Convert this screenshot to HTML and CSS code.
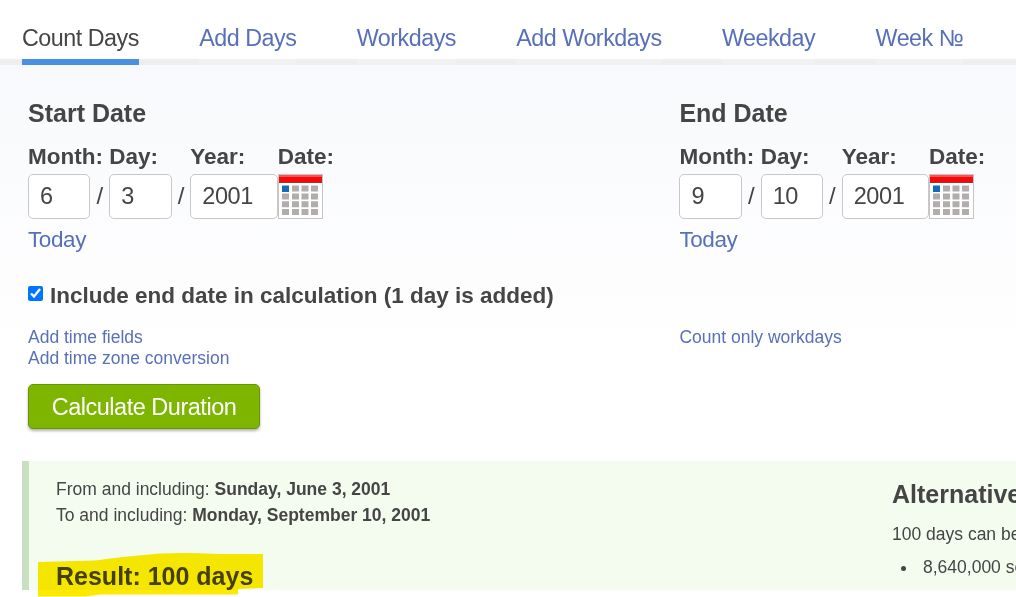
FILE: index.html
```html
<!DOCTYPE html>
<html lang="en">
<head>
  <meta charset="utf-8">
  <title>Date Duration Calculator</title>
  <link rel="stylesheet" href="styles.css">
</head>
<body>

<svg width="0" height="0" class="defs">
  <symbol id="calendar" viewBox="0 0 45 45">
    <rect x=".5" y=".5" width="44" height="44" fill="#fff" stroke="#c4c4c4"/>
    <rect x="1" y="1" width="43" height="8" fill="#f80808"/>
    <rect x="1" y="1" width="43" height="2" fill="#fb5252"/>
    <rect x="1" y="8" width="43" height="1" fill="#a03030"/>
    <path d="M14 14.500h7M23.500 14.500h7M33 14.500h7M4 22.500h7M14 22.500h7M23.500 22.500h7M33 22.500h7M4 30.300h7M14 30.300h7M23.500 30.300h7M33 30.300h7M4 38h7M14 38h7M23.500 38h7M33 38h7" fill="none" stroke="#b1adac" stroke-width="6"/>
    <rect x="4" y="11.500" width="7" height="6.500" fill="#146cb8"/>
  </symbol>
</svg>

<nav class="tabs">
  <a class="active" href="#">Count Days</a>
  <a href="#">Add Days</a>
  <a href="#">Workdays</a>
  <a href="#">Add Workdays</a>
  <a href="#">Weekday</a>
  <a href="#">Week №</a>
</nav>

<form class="calc">
  <div class="dates">
    <div class="date">
      <h2>Start Date</h2>
      <div class="fields">
        <label for="m1">Month:</label><span></span>
        <label for="d1">Day:</label><span></span>
        <label for="y1">Year:</label>
        <label>Date:</label>
        <input id="m1" type="text" value="6"><span>/</span>
        <input id="d1" type="text" value="3"><span>/</span>
        <input id="y1" type="text" value="2001">
        <svg class="cal"><use href="#calendar"/></svg>
      </div>
      <a class="today" href="#">Today</a>
    </div>
    <div class="date">
      <h2>End Date</h2>
      <div class="fields">
        <label for="m2">Month:</label><span></span>
        <label for="d2">Day:</label><span></span>
        <label for="y2">Year:</label>
        <label>Date:</label>
        <input id="m2" type="text" value="9"><span>/</span>
        <input id="d2" type="text" value="10"><span>/</span>
        <input id="y2" type="text" value="2001">
        <svg class="cal"><use href="#calendar"/></svg>
      </div>
      <a class="today" href="#">Today</a>
    </div>
  </div>

  <label class="include"><input type="checkbox" checked>Include end date in calculation (1 day is added)</label>

  <div class="options">
    <div><a href="#">Add time fields</a><br><a href="#">Add time zone conversion</a></div>
    <div><a href="#">Count only workdays</a></div>
  </div>

  <button class="submit" type="button">Calculate Duration</button>
</form>

<div class="result">
  <div class="summary">
    <p>From and including: <b>Sunday, June 3, 2001</b><br>To and including: <b>Monday, September 10, 2001</b></p>
    <h2>Result: 100 days
      <svg class="marker" viewBox="0 0 226 44"><path d="M0 9 57 7.500Q90 3 122 .5Q150-.5 180 1L225 1V35L200 36V41.500H62L48 43.500H0Z" fill="#ffe900"/></svg>
    </h2>
  </div>
  <div class="alt">
    <h2>Alternative time units</h2>
    <p>100 days can be converted to one of these units:</p>
    <ul>
      <li>8,640,000 seconds</li>
    </ul>
  </div>
</div>

</body>
</html>
```

FILE: styles.css
```css
* {
  box-sizing: border-box;
}
body {
  margin: 0;
  height: 597px;
  overflow: hidden;
  font-family: "Liberation Sans", Arial, sans-serif;
  font-size: 17.5px;
  color: #454545;
  background: #fff;
}
a {
  color: #5870b8;
  text-decoration: none;
}
h2 {
  margin: 0;
  font-size: 25px;
  line-height: 30px;
}
.defs {
  display: block;
}

.tabs {
  display: flex;
  gap: 60.3px;
  height: 65px;
  padding-left: 22px;
  background: linear-gradient(#fff 59px, #eee 59px);
}
.tabs a {
  padding-top: 24px;
  font-size: 23.3px;
  line-height: 28px;
  letter-spacing: -.48px;
  white-space: nowrap;
  border-bottom: 6px solid #f1f1f1;
}
.tabs a.active {
  color: #454545;
  border-color: #4a90e2;
}

.calc {
  height: 396px;
  padding: 33px 0 0 28px;
  background: linear-gradient(#f8f9fc, #fff 300px);
}
.dates, .options {
  display: grid;
  grid-template-columns: 651.4px 1fr;
}
.fields {
  display: grid;
  grid-template-columns: 62.4px 18.9px 62.4px 18.6px 87.4px 1fr;
  grid-template-rows: 46px 45px;
  font-size: 22.5px;
}
.fields label {
  width: 0;
  padding-top: 16px;
  font-weight: bold;
  line-height: 26px;
  white-space: nowrap;
}
.fields span {
  font-size: 24px;
  line-height: 44px;
  text-align: center;
}
.fields input {
  width: 100%;
  padding: 0 11px;
  font: 23.5px "Liberation Sans", Arial, sans-serif;
  letter-spacing: -.4px;
  color: #454545;
  background: #fff;
  border: 1px solid #c8c8c8;
  border-radius: 5px;
}
.cal {
  width: 45px;
  height: 45px;
}
.today {
  display: block;
  margin-top: 8px;
  font-size: 22.5px;
  line-height: 26px;
  letter-spacing: -.4px;
}
.include {
  display: flex;
  align-items: center;
  height: 26px;
  margin-top: 30px;
  font-size: 22.5px;
  font-weight: bold;
}
.include input {
  width: 15px;
  height: 15px;
  margin: 0 7px 5px 0;
}
.options {
  margin-top: 18px;
  line-height: 21px;
}
.submit {
  display: block;
  width: 232px;
  height: 45px;
  margin-top: 15px;
  padding: 2px 0 0;
  font: 23.5px "Liberation Sans", Arial, sans-serif;
  letter-spacing: -.48px;
  color: #fff;
  background: #7db500;
  border: 1px solid #659800;
  border-radius: 5px;
  box-shadow: 0 2px 3px rgba(0, 0, 0, .3);
}

.result {
  display: grid;
  grid-template-columns: 836px 1fr;
  height: 129px;
  margin-left: 22px;
  padding: 15px 0 0 27px;
  background: #f4fcf0;
  border-left: 7px solid #c9dfc1;
}
.summary p {
  margin: 0;
  line-height: 26px;
}
.summary h2 {
  position: relative;
  margin-top: 33px;
}
.marker {
  position: absolute;
  left: -18px;
  top: -8px;
  width: 226px;
  height: 44px;
  mix-blend-mode: multiply;
}
.alt {
  overflow-x: clip;
  min-width: 0;
  white-space: nowrap;
}
.alt h2 {
  margin-top: 3px;
}
.alt p {
  margin: 15px 0 0;
  line-height: 20px;
}
.alt ul {
  margin: 13px 0 0;
  padding: 0;
  line-height: 20px;
  list-style: none;
}
.alt li {
  display: flex;
  align-items: center;
}
.alt li::before {
  content: "";
  flex: none;
  width: 5px;
  height: 5px;
  margin: 3px 17px 0 9px;
  border-radius: 50%;
  background: #454545;
}
```
